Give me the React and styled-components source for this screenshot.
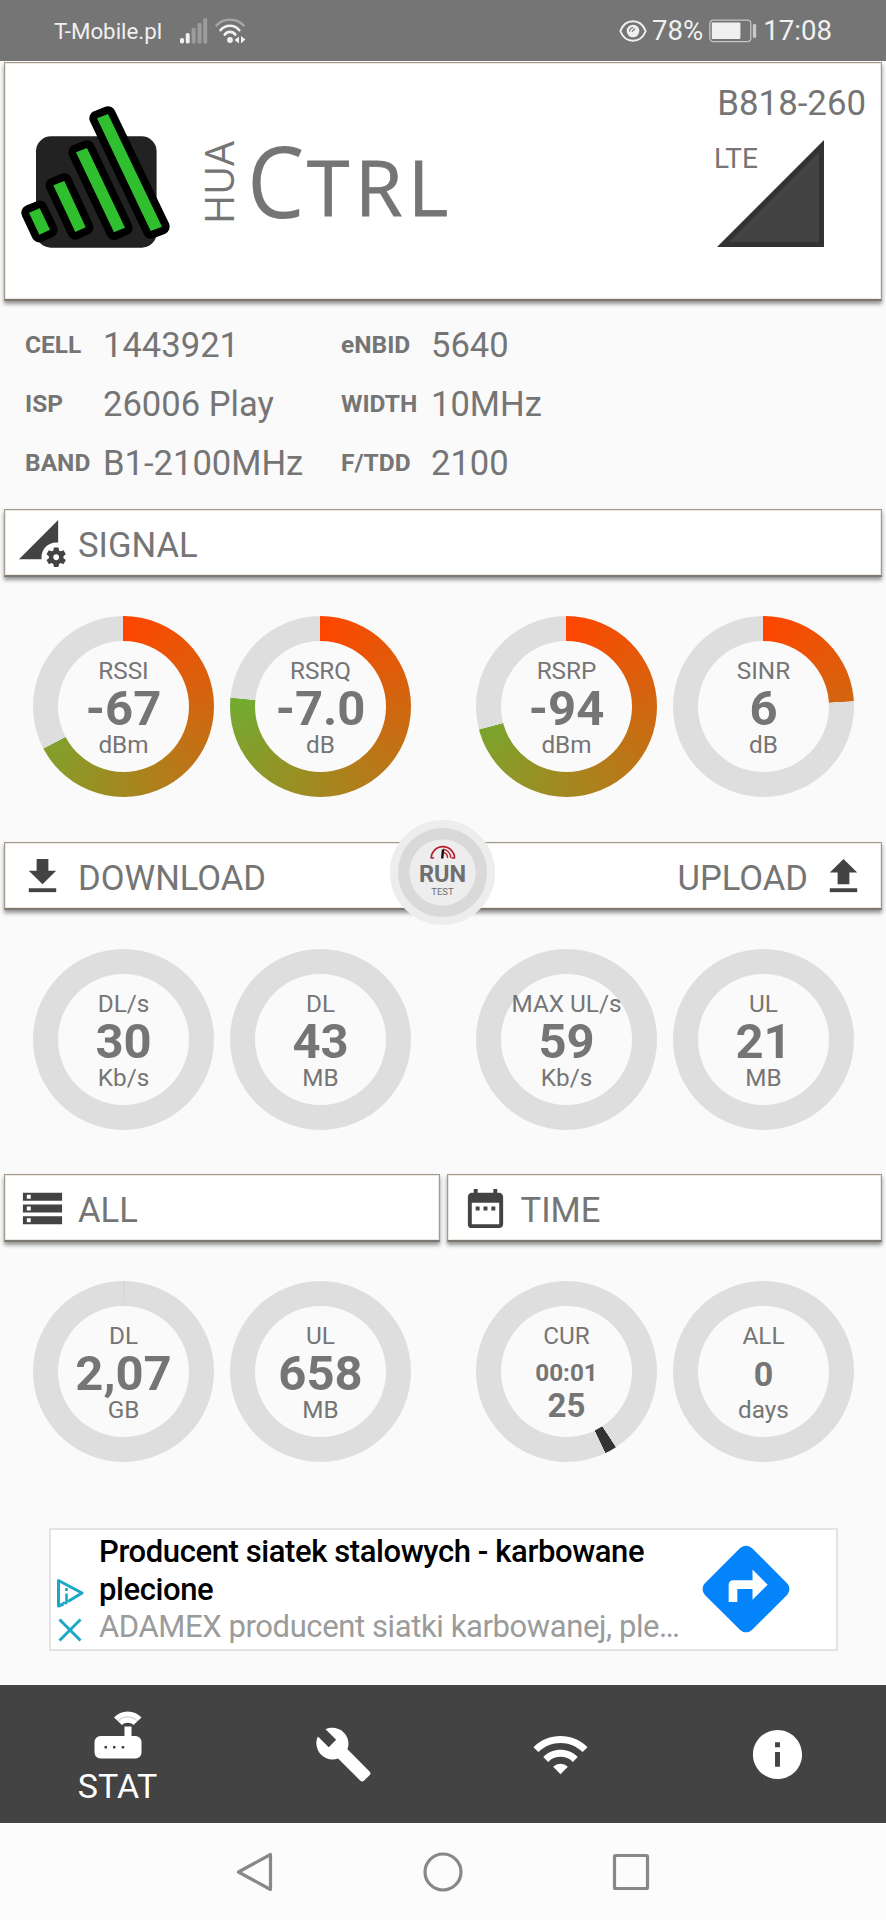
import React from 'react';
import styled, { createGlobalStyle } from 'styled-components';
import {
    MdBuild,
    MdDateRange,
    MdDirections,
    MdInfo,
    MdPermDataSetting,
    MdStorage,
    MdWifi,
} from 'react-icons/md';

const GlobalStyle = createGlobalStyle`
    * { box-sizing: border-box; }

    body {
        margin: 0;
        background: #fafafa;
        font-family: Roboto, "Liberation Sans", sans-serif;
        color: #757575;
    }

    svg { display: block; flex: none; }
`;

const Screen = styled.div`
    display: flex;
    flex-direction: column;
    width: 886px;
    height: 1920px;
    overflow: hidden;
`;

/* status bar */

const StatusBar = styled.div`
    display: flex;
    align-items: center;
    height: 61px;
    flex: none;
    padding: 1px 54px 0 54px;
    background: #757575;
    color: #f0f0f0;
    font-size: 27.6px;
    line-height: 60px;
`;

const Carrier = styled.span`
    width: 126px;
    font-size: 22.3px;
`;

const StatusGroup = styled.div`
    display: flex;
    align-items: center;
    gap: ${props => props.$gap}px;
    margin-left: ${props => (props.$end ? 'auto' : 0)};
`;

/* cards */

const Card = styled.div`
    position: relative;
    display: flex;
    background: #fff;
    border: 1px solid #a39b8e;
    border-bottom: 2px solid #7d786f;
    box-shadow: inset 0 0 0 1px #ece7e0, 0 3px 4px rgba(0, 0, 0, 0.42);
`;

const HeaderCard = styled(Card)`
    height: 239px;
    flex: none;
    margin: 1px 4px 0;
    padding: 42px 15px 0 16px;
`;

const Brand = styled.div`
    display: flex;
    margin-top: 32px;
    height: 100px;
`;

const Hua = styled.span`
    writing-mode: vertical-rl;
    transform: rotate(180deg);
    width: 54px;
    height: 86px;
    margin: 1px 0 0 21px;
    font-family: "Open Sans", "Noto Sans", sans-serif;
    font-size: 39.6px;
    line-height: 54px;
`;

const BigC = styled.span`
    width: 56px;
    margin: -7px 0 0 1px;
    font-family: "Open Sans", "Noto Sans", sans-serif;
    font-size: 98px;
    line-height: 100px;
    transform: scaleX(0.93);
    transform-origin: left;
`;

const Trl = styled.span`
    margin-left: 4px;
    font-family: "Open Sans", "Noto Sans", sans-serif;
    font-size: 77px;
    line-height: 100px;
    letter-spacing: 5.5px;
    -webkit-text-stroke: 0.8px #757575;
`;

const Device = styled.div`
    display: flex;
    flex-direction: column;
    align-items: flex-end;
    margin: -22px 0 0 auto;
`;

const Model = styled.span`
    font-size: 34.8px;
    line-height: 40px;
`;

const Network = styled.div`
    display: flex;
    margin: 17px 42px 0 0;
    font-size: 28px;
    line-height: 38px;

    svg { margin-left: -41px; }
`;

const Bar = styled(Card)`
    align-items: center;
    flex: ${props => (props.$half ? '1' : 'none')};
    height: 68px;
    margin: ${props => (props.$half ? '0' : '0 4px')};
    padding: 0 14px;
    font-size: 34.6px;
    line-height: 40px;
    justify-content: space-between;
`;

const BarLabel = styled.div`
    display: flex;
    align-items: center;
    gap: 12px;
    flex-direction: ${props => (props.$reverse ? 'row-reverse' : 'row')};

    svg {
        margin-top: 2px;
        color: #434343;
    }

    span { padding-top: 4px; }
`;

const BarPair = styled.div`
    display: flex;
    gap: 7px;
    margin: 0 4px;
`;

/* cell info */

const InfoGrid = styled.div`
    display: grid;
    grid-template-columns: 77px 239px 89px auto;
    grid-auto-rows: 59px;
    align-items: center;
    height: 208px;
    flex: none;
    padding: 15px 0 0 25px;
`;

const InfoKey = styled.span`
    padding-bottom: 3px;
    font-size: 24.5px;
    font-weight: 700;
`;

const InfoValue = styled.span`
    padding: 0 0 2px 1px;
    font-size: 34.6px;
`;

/* gauges */

const GaugeRow = styled.div`
    display: grid;
    grid-template-columns: repeat(2, 443px);
    flex: none;
    height: ${props => props.$height || 264}px;
    padding-top: 39px;
`;

const GaugePair = styled.div`
    display: flex;
    gap: 16px;
    padding-left: 33px;
`;

const Ring = styled.div`
    width: 181px;
    height: 181px;
    padding: 25px;
    border-radius: 50%;
    background: ${props => props.$fill};
`;

const Dial = styled.div`
    display: flex;
    flex-direction: column;
    align-items: center;
    justify-content: center;
    width: 131px;
    height: 131px;
    padding-bottom: ${props => (props.$timer ? 6 : 0)}px;
    border-radius: 50%;
    background: #fafafa;
    white-space: nowrap;
`;

const GaugeText = styled.span`
    font-size: 24.3px;
    line-height: ${props => props.$line}px;
`;

const GaugeValue = styled.span`
    font-size: ${props => props.$size || 49}px;
    line-height: ${props => props.$line || 50}px;
    font-weight: 700;
`;

/* speed test button, sits over the download / upload bar */

const RunButton = styled.button`
    position: absolute;
    left: 385px;
    top: -23px;
    display: flex;
    flex-direction: column;
    align-items: center;
    width: 105px;
    height: 105px;
    padding: 17px 0 0;
    border: 8px solid #ededed;
    border-radius: 50%;
    background: radial-gradient(circle, #ededed 32.5px, #d9d9d9 33.5px);
    font-family: inherit;
    color: #6f6f6f;

    b {
        margin-top: 2px;
        font-size: 23.5px;
        line-height: 26px;
    }

    small {
        font-size: 9.5px;
        line-height: 9px;
    }
`;

/* ad banner */

const Ad = styled.div`
    display: flex;
    flex: none;
    width: 789px;
    height: 123px;
    margin-left: 49px;
    border: 2px solid #e4e4e4;
    background: #fff;
`;

const AdChoices = styled.div`
    display: flex;
    flex-direction: column;
    gap: 9px;
    width: 48px;
    padding: 48px 0 0 4px;
`;

const AdText = styled.div`
    width: 595px;
    font-size: 31px;
    line-height: 37.6px;
    letter-spacing: -0.4px;
    padding-top: 3px;
`;

const AdTitle = styled.div`
    font-weight: 500;
    color: #000;
    white-space: pre-line;
`;

const AdBody = styled.div`
    color: #9b9b9b;
`;

const AdAction = styled.div`
    padding-top: 7px;
    color: #0384fb;
`;

/* bottom navigation */

const TabBar = styled.nav`
    display: grid;
    grid-template-columns: 235px repeat(3, 217px);
    flex: none;
    height: 138px;
    margin-top: 34px;
    background: #434343;
    color: #fff;
`;

const Tab = styled.div`
    display: flex;
    flex-direction: column;
    align-items: center;
    justify-content: center;
    padding-top: ${props => (props.$active ? 9 : 0)}px;
    font-size: 34px;
    line-height: 40px;

    svg + span { margin-top: 7px; }
`;

const SystemNav = styled.div`
    display: flex;
    justify-content: center;
    align-items: center;
    gap: 148px;
    flex: 1;
    background: #fcfcfc;
`;

const TRACK = '#dedede';

// Colour for a full turn; the arc shows only the first `degrees` of it.
const signalFill = degrees => {
    const t = degrees / 360;
    const mix = (from, to) => Math.round(from + (to - from) * t);
    const end = `rgb(${mix(255, 70)}, ${mix(69, 203)}, ${mix(0, 64)})`;
    return `conic-gradient(#ff4500 0deg, ${end} ${degrees}deg, ${TRACK} ${degrees + 0.4}deg)`;
};

const secondsFill = `conic-gradient(${TRACK} 146.8deg, #333 147.1deg 154.3deg, ${TRACK} 154.6deg)`;
const hairlineFill = `conic-gradient(#cbdbe2 0.6deg, ${TRACK} 0.8deg)`;

const signalGauges = [
    { label: 'RSSI', value: '-67', unit: 'dBm', fill: signalFill(242) },
    { label: 'RSRQ', value: '-7.0', unit: 'dB', fill: signalFill(275.3) },
    { label: 'RSRP', value: '-94', unit: 'dBm', fill: signalFill(255) },
    { label: 'SINR', value: '6', unit: 'dB', fill: signalFill(86.4) },
];

const trafficGauges = [
    { label: 'DL/s', value: '30', unit: 'Kb/s' },
    { label: 'DL', value: '43', unit: 'MB' },
    { label: 'MAX UL/s', value: '59', unit: 'Kb/s' },
    { label: 'UL', value: '21', unit: 'MB' },
];

const totalGauges = [
    { label: 'DL', value: '2,07', unit: 'GB', fill: hairlineFill },
    { label: 'UL', value: '658', unit: 'MB' },
    { label: 'CUR', time: '00:01', value: '25', fill: secondsFill },
    { label: 'ALL', value: '0', unit: 'days', size: 34 },
];

const cellInfo = [
    ['CELL', '1443921'], ['eNBID', '5640'],
    ['ISP', '26006 Play'], ['WIDTH', '10MHz'],
    ['BAND', 'B1-2100MHz'], ['F/TDD', '2100'],
];

function Gauge({ label, value, unit, time, size, fill }) {
    return (
        <Ring $fill={fill || TRACK}>
            <Dial $timer={Boolean(time)}>
                <GaugeText $line={26}>{label}</GaugeText>
                { time && <GaugeValue $size={24.3} $line={47}>{time}</GaugeValue> }
                <GaugeValue $size={time ? 33 : size} $line={time ? 19 : 50}>{value}</GaugeValue>
                { unit && <GaugeText $line={22}>{unit}</GaugeText> }
            </Dial>
        </Ring>
    );
}

function Gauges({ items, height }) {
    return (
        <GaugeRow $height={height}>
            <GaugePair>
                { items.slice(0, 2).map(item => <Gauge key={item.label} {...item} />) }
            </GaugePair>
            <GaugePair>
                { items.slice(2).map(item => <Gauge key={item.label} {...item} />) }
            </GaugePair>
        </GaugeRow>
    );
}

const SignalIcon = () => (
    <svg width="28" height="26" viewBox="0 0 28 26" fill="#f0f0f0">
        <rect x="0" y="20" width="4" height="5.5" rx="1.8" />
        <rect x="5.7" y="15" width="4" height="10.5" rx="1.8" />
        <g fill="#9c9c9c">
            <rect x="11.7" y="10" width="4" height="15.5" rx="1.2" />
            <rect x="17.5" y="5" width="4" height="20.5" rx="1.2" />
            <rect x="23.2" y="0.3" width="4" height="25.2" rx="1.2" />
        </g>
    </svg>
);

const StatusWifiIcon = () => (
    <svg width="31" height="26" viewBox="0 0 31 26" fill="none" strokeWidth="2.6" strokeLinecap="round">
        <path d="M1.5 7.3C8 -0.2 22 -0.2 28.5 7.3" stroke="#a5a5a5" />
        <path d="M5.5 12.2C10.5 6.2 19.5 6.2 24.3 12.2" stroke="#f0f0f0" />
        <path d="M9.7 16.6C12.5 13 17.5 13 20.4 16.6" stroke="#f0f0f0" />
        <circle cx="15" cy="22" r="2.9" fill="#f0f0f0" />
        <path d="M24 18.5v7l-4.5-3.5zM26 18l4.4 3.5-4.4 4z" fill="#f0f0f0" />
    </svg>
);

const EyeIcon = () => (
    <svg width="28" height="22" viewBox="0 0 28 22" fill="none" stroke="#f0f0f0" strokeWidth="2">
        <path d="M1.3 11C6.5 -2 21.5 -2 26.7 11C21.5 24 6.5 24 1.3 11z" />
        <circle cx="14" cy="11" r="6.3" fill="#f0f0f0" stroke="none" />
        <path d="M10.6 11.5C10.6 9 12 7.6 14.4 7.6M13 11.6L16 8.6" stroke="#757575" strokeWidth="1.3" />
    </svg>
);

const BatteryIcon = () => (
    <svg width="50" height="24" viewBox="-1 0 50 24">
        <rect x="0.8" y="1.2" width="41" height="21.4" rx="3.4" fill="none" stroke="#c4c4c4" strokeWidth="1.3" />
        <rect x="2.8" y="3.5" width="28.6" height="16.6" rx="1" fill="#f0f0f0" />
        <rect x="43.8" y="5" width="3.4" height="14" rx="1.4" fill="#c8c8c8" />
    </svg>
);

const logoBars = [
    'M29 212.7l10.7-4.4L50 229.7l-10.7 5z',
    'M53.3 185.3l11-4.3 21.4 46.3-10.4 4.7z',
    'M76 152.3l11-4.3 38 79.7-11 4.6z',
    'M97 118.3l11-4.3 54 112.7-11.3 4.3z',
].join('');

const LogoIcon = () => (
    <svg width="150" height="140" viewBox="21 105 150 140" overflow="visible">
        <rect x="36" y="136.3" width="120.6" height="111.4" rx="15" fill="#222" />
        <path d={logoBars} stroke="#000" strokeWidth="15.4" strokeLinejoin="round" />
        <path d={logoBars} fill="#2fbf2f" />
    </svg>
);

const CellTriangle = () => (
    <svg width="107" height="107" viewBox="0 0 107 107">
        <path d="M0 107L107 0V107z" fill="#323232" />
        <path d="M12 102L102 12V102z" fill="#434343" />
    </svg>
);

const ArrowIcon = ({ up }) => (
    <svg width="47" height="47" viewBox="0 0 24 24" fill="currentColor">
        <path d={up ? 'M9 16h6v-6h4l-7-7-7 7h4z' : 'M19 9h-4V3H9v6H5l7 7 7-7z'} />
        <path d="M5 18v2h14v-2z" />
    </svg>
);

const SpeedIcon = () => (
    <svg width="26" height="14" viewBox="0 0 26 14" fill="none" stroke="#b8202c" strokeWidth="1.7">
        <path d="M1.2 13.4A11.6 11.6 0 0 1 24.6 13.4M1 13h3M21.6 13h3" />
        <path d="M13 4.3A8.6 8.6 0 0 1 20.8 13M13.5 7.4A5.8 5.8 0 0 1 17.6 13" strokeWidth="1.4" />
        <path d="M12.2 13.5L13 4.5" stroke="#111" strokeWidth="2.4" />
    </svg>
);

const RouterIcon = () => (
    <svg width="48" height="48" viewBox="0 0 48 48" fill="#fff">
        <path d="M20 6.5C27 -1.5 40.5 -1.5 47.5 6.5L39.5 14C36.5 11 31 11 28 14z" />
        <path d="M24 10C29.5 4.5 38 4.5 43.5 10" fill="none" stroke="#aaa" strokeWidth="0.7" />
        <rect x="30.5" y="15.5" width="7" height="12" />
        <rect x="0.5" y="25" width="47" height="22.5" rx="6" />
        <path d="M10.5 35h2.5v2.5h-2.5zM19 35h2.5v2.5h-2.5zM27.7 35h2.5v2.5h-2.5z" fill="#434343" />
    </svg>
);

const AdInfoIcon = () => (
    <svg width="30" height="31" viewBox="0 0 30 31" fill="none" stroke="#1ba8c4" strokeWidth="3" strokeLinejoin="round">
        <path d="M8.500 26L3.500 28V2.500L27 15L13 23.500" />
        <path d="M11.500 10v3M11.500 15.500v9M7.500 25h5" strokeWidth="2.600" />
    </svg>
);

const AdCloseIcon = () => (
    <svg width="30" height="24" viewBox="0 0 30 24" stroke="#1ba8c4" strokeWidth="3">
        <path d="M4.5 1.5L25.5 22.5M25.5 1.5L4.5 22.5" />
    </svg>
);

const SystemIcon = ({ children }) => (
    <svg width="40" height="40" viewBox="0 0 40 40" fill="none" stroke="#888" strokeWidth="3.2" strokeLinejoin="round">
        {children}
    </svg>
);

export default function App() {
    return (
        <Screen>
            <GlobalStyle />
            <StatusBar>
                <Carrier>T-Mobile.pl</Carrier>
                <StatusGroup $gap={7}>
                    <SignalIcon />
                    <StatusWifiIcon />
                </StatusGroup>
                <StatusGroup $gap={5} $end>
                    <EyeIcon />
                    <span>78%</span>
                    <BatteryIcon />
                    <span>17:08</span>
                </StatusGroup>
            </StatusBar>

            <HeaderCard>
                <LogoIcon />
                <Brand>
                    <Hua>HUA</Hua>
                    <BigC>C</BigC>
                    <Trl>TRL</Trl>
                </Brand>
                <Device>
                    <Model>B818-260</Model>
                    <Network>
                        <span>LTE</span>
                        <CellTriangle />
                    </Network>
                </Device>
            </HeaderCard>

            <InfoGrid>
                { cellInfo.map(([key, value]) => (
                    <React.Fragment key={key}>
                        <InfoKey>{key}</InfoKey>
                        <InfoValue>{value}</InfoValue>
                    </React.Fragment>
                )) }
            </InfoGrid>

            <Bar>
                <BarLabel><MdPermDataSetting size={47} /><span>SIGNAL</span></BarLabel>
            </Bar>
            <Gauges items={signalGauges} height={265} />

            <Bar>
                <BarLabel><ArrowIcon /><span>DOWNLOAD</span></BarLabel>
                <BarLabel $reverse><ArrowIcon up /><span>UPLOAD</span></BarLabel>
                <RunButton type="button">
                    <SpeedIcon />
                    <b>RUN</b>
                    <small>TEST</small>
                </RunButton>
            </Bar>
            <Gauges items={trafficGauges} />

            <BarPair>
                <Bar $half>
                    <BarLabel><MdStorage size={47} /><span>ALL</span></BarLabel>
                </Bar>
                <Bar $half>
                    <BarLabel><MdDateRange size={47} /><span>TIME</span></BarLabel>
                </Bar>
            </BarPair>
            <Gauges items={totalGauges} height={286} />

            <Ad>
                <AdChoices>
                    <AdInfoIcon />
                    <AdCloseIcon />
                </AdChoices>
                <AdText>
                    <AdTitle>{'Producent siatek stalowych - karbowane\nplecione'}</AdTitle>
                    <AdBody>ADAMEX producent siatki karbowanej, ple…</AdBody>
                </AdText>
                <AdAction><MdDirections size={104} /></AdAction>
            </Ad>

            <TabBar>
                <Tab $active><RouterIcon /><span>STAT</span></Tab>
                <Tab><MdBuild size={59} /></Tab>
                <Tab><MdWifi size={59} /></Tab>
                <Tab><MdInfo size={59} /></Tab>
            </TabBar>

            <SystemNav>
                <SystemIcon><path d="M35.5 2.5V37.5L3.5 20z" /></SystemIcon>
                <SystemIcon><circle cx="20" cy="20" r="18" /></SystemIcon>
                <SystemIcon><rect x="3.5" y="3.5" width="33" height="33" rx="1" /></SystemIcon>
            </SystemNav>
        </Screen>
    );
}
